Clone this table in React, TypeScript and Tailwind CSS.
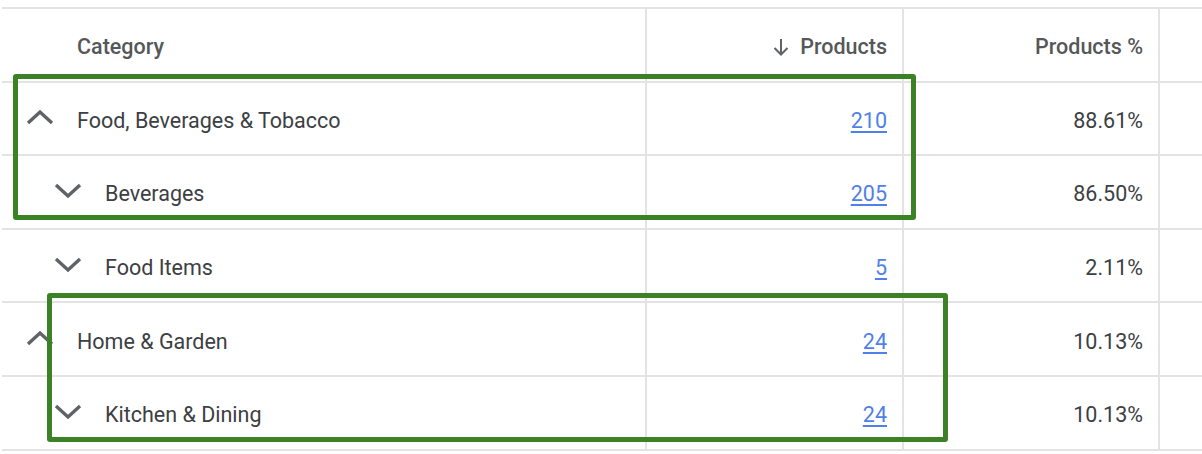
import React from "react";

type Row = {
  label: string;
  level: 0 | 1;
  open: boolean;
  count: string;
  pct: string;
};

const rows: Row[] = [
  { label: "Food, Beverages & Tobacco", level: 0, open: true, count: "210", pct: "88.61%" },
  { label: "Beverages", level: 1, open: false, count: "205", pct: "86.50%" },
  { label: "Food Items", level: 1, open: false, count: "5", pct: "2.11%" },
  { label: "Home & Garden", level: 0, open: true, count: "24", pct: "10.13%" },
  { label: "Kitchen & Dining", level: 1, open: false, count: "24", pct: "10.13%" },
];

function Chevron({ up }: { up: boolean }) {
  return (
    <svg width="30" height="16" viewBox="0 0 30 16" className="shrink-0">
      <polyline
        points={up ? "3,14 15,3 27,14" : "3,2 15,13 27,2"}
        fill="none"
        stroke="#5f6368"
        strokeWidth="3.4"
        strokeLinecap="butt"
        strokeLinejoin="miter"
      />
    </svg>
  );
}

function ArrowDown() {
  return (
    <svg width="18" height="18" viewBox="0 0 18 18" className="shrink-0">
      <line x1="9" y1="1" x2="9" y2="16.5" stroke="#5f6368" strokeWidth="2" />
      <polyline points="2.5,10 9,16.5 15.5,10" fill="none" stroke="#5f6368" strokeWidth="2" />
    </svg>
  );
}

export default function App() {
  const cell = "h-[73.6px] border-b-2 border-[#e3e3e3] flex items-center pt-[5px]";
  return (
    <div
      className="relative w-[1202px] h-[454px] overflow-hidden bg-white pt-[7px] pl-[2px]"
      style={{ fontFamily: "Roboto, 'Noto Sans', Arial, sans-serif" }}
    >
      <div className="grid grid-cols-[645px_257px_256px_1fr] border-t-2 border-[#e3e3e3] text-[21.5px]">
        {/* header */}
        <div className={`${cell} border-r-2 pl-[75px] font-medium text-[#555759]`}>Category</div>
        <div className={`${cell} border-r-2 justify-end pr-[15px] gap-[10px] font-medium text-[#555759]`}>
          <ArrowDown />
          <span>Products</span>
        </div>
        <div className={`${cell} border-r-2 justify-end pr-[15px] font-medium text-[#555759]`}>Products %</div>
        <div className={cell}></div>

        {rows.map((r, i) => (
          <React.Fragment key={i}>
            <div
              className={`${cell} border-r-2 text-[#3c4043] ${
                r.level === 0 ? "pl-[23px] gap-[22px]" : "pl-[51px] gap-[22px]"
              }`}
            >
              <span className={r.open ? "-mt-[8px]" : "-mt-[7px]"}>
                <Chevron up={r.open} />
              </span>
              <span>{r.label}</span>
            </div>
            <div className={`${cell} border-r-2 justify-end pr-[15px]`}>
              <span className="text-[#4f7fe8] underline underline-offset-[3px] decoration-[1.5px]">{r.count}</span>
            </div>
            <div className={`${cell} border-r-2 justify-end pr-[15px] text-[#3c4043]`}>{r.pct}</div>
            <div className={cell}></div>
          </React.Fragment>
        ))}
      </div>

      {/* highlight boxes */}
      <div className="absolute left-[13px] top-[74px] w-[903px] h-[146px] border-[5px] border-[#3b8126] rounded-[3px]" />
      <div className="absolute left-[47px] top-[293px] w-[901px] h-[149px] border-[5px] border-[#3b8126] rounded-[3px]" />
    </div>
  );
}
